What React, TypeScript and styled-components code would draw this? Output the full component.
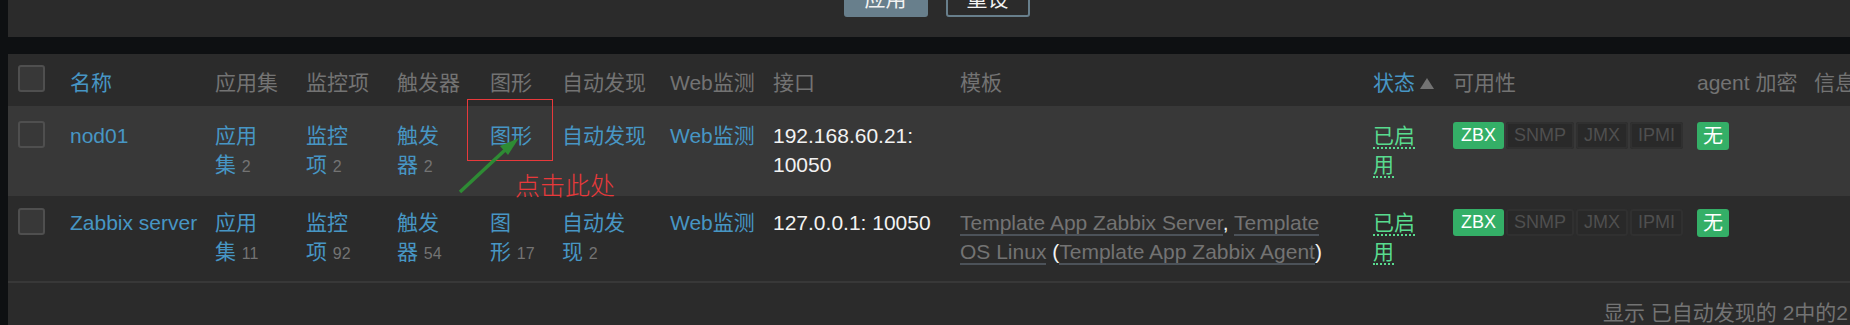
import React from 'react';
import styled, { createGlobalStyle } from 'styled-components';

const GlobalStyle = createGlobalStyle`
  html, body {
    margin: 0;
    padding: 0;
    background: #0e1012;
    overflow: hidden;
  }
  body {
    font-family: 'Liberation Sans', 'Noto Sans CJK SC', sans-serif;
    font-size: 21px;
  }
`;

const COLUMNS = '62px 145px 91px 91px 93px 72px 108px 103px 187px 413px 80px 244px 117px 80px';

const Page = styled.div`
  position: relative;
  width: 1850px;
  height: 325px;
  padding-left: 8px;
  box-sizing: border-box;
  overflow: hidden;
  display: flex;
  flex-direction: column;
  gap: 17px;
`;

const FilterPanel = styled.div`
  height: 37px;
  flex-shrink: 0;
  background: #2b2b2b;
  display: flex;
  justify-content: center;
  align-items: flex-start;
  gap: 18px;
  padding-left: 15px;
`;

const Button = styled.button<{ $outline?: boolean }>`
  margin-top: -23px;
  height: 40px;
  width: 84px;
  border-radius: 3px;
  font: inherit;
  color: #f2f2f2;
  background: ${p => (p.$outline ? 'transparent' : '#687f8c')};
  border: 2px solid #687f8c;
`;

const TablePanel = styled.div`
  flex: 1;
  background: #2b2b2b;
  overflow: hidden;
`;

const Row = styled.div<{ $head?: boolean; $hover?: boolean }>`
  display: grid;
  grid-template-columns: ${COLUMNS};
  line-height: 29px;
  background: ${p => (p.$hover ? '#383838' : 'transparent')};
  border-bottom: ${p => (p.$head ? '3px' : '2px')} solid #383838;
`;

const HeadCell = styled.div`
  padding: 14px 20px 9px 0;
  white-space: nowrap;
  color: #737373;
`;

const Cell = styled.div<{ $nowrap?: boolean }>`
  padding: 12px 20px 13px 0;
  white-space: ${p => (p.$nowrap ? 'nowrap' : 'normal')};
  color: #f2f2f2;
`;

const CheckCell = styled.div<{ $head?: boolean }>`
  padding: ${p => (p.$head ? '11px' : '12px')} 0 0 10px;
`;

const Checkbox = styled.span`
  display: block;
  width: 27px;
  height: 27px;
  box-sizing: border-box;
  background: #383838;
  border: 2px solid #4f4f4f;
  border-radius: 3px;
`;

const Link = styled.span`
  color: #4796c4;
`;

const Count = styled.span`
  font-size: 16px;
  color: #737373;
`;

const SortArrow = styled.span`
  display: inline-block;
  margin-left: 5px;
  width: 0;
  height: 0;
  border-left: 7px solid transparent;
  border-right: 7px solid transparent;
  border-bottom: 11px solid #737373;
  vertical-align: 1px;
`;

const TemplateLink = styled.span`
  color: #737373;
  border-bottom: 2px solid #4c5259;
`;

const Enabled = styled.span`
  color: #59db8f;
  border-bottom: 2px dotted #59db8f;
`;

const Badges = styled.div`
  display: flex;
  gap: 2px;
  margin-top: 1px;
`;

const Badge = styled.span<{ $on?: boolean }>`
  height: 27px;
  line-height: 27px;
  padding: 0 8px;
  font-size: 18px;
  border-radius: 3px;
  color: ${p => (p.$on ? '#ffffff' : '#4f4f4f')};
  background: ${p => (p.$on ? '#34af67' : '#292929')};
  box-shadow: ${p => (p.$on ? 'none' : 'inset 0 0 0 2px #303030')};
`;

const Encryption = styled.span`
  display: inline-block;
  height: 28px;
  line-height: 28px;
  padding: 0 6px;
  font-size: 20px;
  border-radius: 3px;
  color: #ffffff;
  background: #34af67;
`;

const Footer = styled.div`
  padding: 15px 2px 0 0;
  text-align: right;
  line-height: 29px;
  color: #737373;
  white-space: nowrap;
`;

const RedBox = styled.div`
  position: absolute;
  left: 467px;
  top: 99px;
  width: 86px;
  height: 62px;
  box-sizing: border-box;
  border: 1px solid #e8393b;
`;

const Arrow = styled.svg`
  position: absolute;
  left: 450px;
  top: 125px;
`;

const Note = styled.div`
  position: absolute;
  left: 515px;
  top: 169px;
  font-family: 'Noto Sans CJK SC', sans-serif;
  font-weight: 300;
  font-size: 25px;
  line-height: 30px;
  color: #e8393b;
`;

const NBSP = '\u00A0';

interface Host {
  name: string;
  apps: number;
  items: number;
  triggers: number;
  graphs?: number;
  discovery?: number;
  iface: string;
  templates?: boolean;
  hover?: boolean;
}

const hosts: Host[] = [
  { name: 'nod01', apps: 2, items: 2, triggers: 2, iface: '192.168.60.21: 10050', hover: true },
  { name: 'Zabbix server', apps: 11, items: 92, triggers: 54, graphs: 17, discovery: 2, iface: '127.0.0.1: 10050', templates: true },
];

const Counted = ({ label, count }: { label: string; count?: number }) => (
  <>
    <Link>{label}</Link>
    {count !== undefined && (
      <>
        {NBSP}
        <Count>{count}</Count>
      </>
    )}
  </>
);

const HostRow = ({ host }: { host: Host }) => (
  <Row $hover={host.hover}>
    <CheckCell>
      <Checkbox />
    </CheckCell>
    <Cell $nowrap>
      <Link>{host.name}</Link>
    </Cell>
    <Cell><Counted label="应用集" count={host.apps} /></Cell>
    <Cell><Counted label="监控项" count={host.items} /></Cell>
    <Cell><Counted label="触发器" count={host.triggers} /></Cell>
    <Cell><Counted label="图形" count={host.graphs} /></Cell>
    <Cell><Counted label="自动发现" count={host.discovery} /></Cell>
    <Cell $nowrap><Link>Web监测</Link></Cell>
    <Cell>{host.iface}</Cell>
    <Cell>
      {host.templates && (
        <>
          <TemplateLink>Template App Zabbix Server</TemplateLink>,{' '}
          <TemplateLink>Template OS Linux</TemplateLink> (
          <TemplateLink>Template App Zabbix Agent</TemplateLink>)
        </>
      )}
    </Cell>
    <Cell><Enabled>已启用</Enabled></Cell>
    <Cell>
      <Badges>
        <Badge $on>ZBX</Badge>
        <Badge>SNMP</Badge>
        <Badge>JMX</Badge>
        <Badge>IPMI</Badge>
      </Badges>
    </Cell>
    <Cell><Encryption>无</Encryption></Cell>
    <Cell />
  </Row>
);

const headers = ['应用集', '监控项', '触发器', '图形', '自动发现', 'Web监测', '接口', '模板'];

const App = () => (
  <Page>
    <GlobalStyle />
    <FilterPanel>
      <Button>应用</Button>
      <Button $outline>重设</Button>
    </FilterPanel>
    <TablePanel>
      <Row $head>
        <CheckCell $head>
          <Checkbox />
        </CheckCell>
        <HeadCell><Link>名称</Link></HeadCell>
        {headers.map(h => (
          <HeadCell key={h}>{h}</HeadCell>
        ))}
        <HeadCell><Link>状态</Link><SortArrow /></HeadCell>
        <HeadCell>可用性</HeadCell>
        <HeadCell>agent 加密</HeadCell>
        <HeadCell>信息</HeadCell>
      </Row>
      {hosts.map(h => (
        <HostRow key={h.name} host={h} />
      ))}
      <Footer>显示 已自动发现的 2中的2</Footer>
    </TablePanel>

    <RedBox />
    <Arrow width="80" height="75" viewBox="0 0 80 75">
      <line x1="10" y1="67" x2="55" y2="25" stroke="#2e8b34" strokeWidth="3.5" />
      <polygon points="69,13 50,21 58,30" fill="#2e8b34" />
    </Arrow>
    <Note>点击此处</Note>
  </Page>
);

export default App;
